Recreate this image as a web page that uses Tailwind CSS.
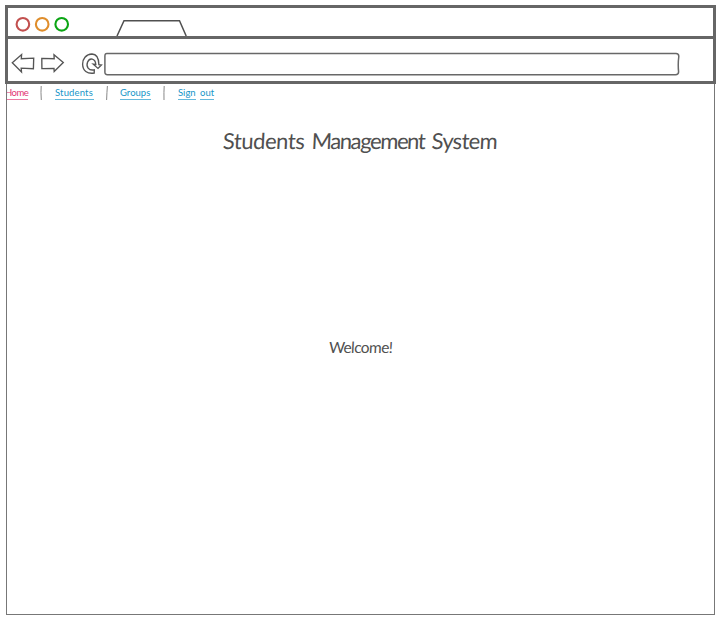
<!DOCTYPE html>
<html lang="en">
<head>
<meta charset="utf-8">
<title>Students Management System</title>
<script src="https://cdn.jsdelivr.net/npm/@tailwindcss/browser@4"></script>
</head>
<body class="bg-white w-[721px] h-[620px] overflow-hidden pt-[5px] pl-[5px] font-['Lato',sans-serif] text-[#505050]">
<div class="w-[711px] h-[610px] flex flex-col">
  <header class="h-[79px] shrink-0 border-[3px] border-[#666] flex flex-col">
    <div class="h-[31px] shrink-0 border-b-[3px] border-[#666] flex items-end">
      <svg class="ml-[6px] self-center mt-[3px]" width="56" height="18" viewBox="0 0 56 18" fill="none" stroke-width="2.1">
        <circle cx="8.9" cy="9.3" r="6.3" stroke="#c2504f"/>
        <circle cx="28.2" cy="9.3" r="6.3" stroke="#df8d2b"/>
        <circle cx="47.7" cy="9.3" r="6.3" stroke="#0ba514"/>
      </svg>
      <svg class="ml-[46px]" width="72" height="18" viewBox="0 0 72 18" fill="none" stroke="#505050" stroke-width="1.5"><path d="M1 18 8 2.7 63.5 2.7 70.2 18"/></svg>
    </div>
    <div class="flex-1 flex">
      <svg class="shrink-0" width="95" height="42" viewBox="8 39 95 42" fill="none" stroke="#555" stroke-width="1.35">
        <path d="M12.3 62.8 21.6 54.5 21.3 58.7 33.7 58.2 33.4 68.7 21.2 68.2 21.5 72Z"/>
        <path d="M41.8 58.4 54.2 58.7 54 54.7 63.3 62.6 54.2 71.6 54 68.4 41.9 68.6Z"/>
        <path d="M94.3 69.8C88.5 71 85.8 66.5 87.6 62C89.6 57.5 95.2 57.8 95.8 64.4L93.2 64.2 98 68.4 101.4 65 98.9 64.7C98.7 57.4 95.8 54 92 54C86 54.2 82.4 59 82.6 64.3C82.8 70.5 87 74.2 94.2 73.1Z"/>
      </svg>
      <svg class="shrink-0 ml-px" width="577" height="42" viewBox="104 39 577 42" fill="none" stroke="#686868" stroke-width="1.5"><path d="M107 53.4H676Q678.9 53.5 678.8 56.5Q677.8 64 678.6 72Q678.5 74.6 675.5 74.7H107.5Q104.8 74.7 104.9 72V56Q105 53.3 107 53.4Z"/></svg>
    </div>
  </header>
  <main class="ml-px w-[709px] flex-1 border border-t-0 border-[#777] flex flex-col items-center overflow-hidden">
    <nav class="w-full h-[20px] shrink-0 flex items-start text-[9.5px] leading-[13px] text-[#1795c8] pt-[2px] whitespace-nowrap">
      <a class="-ml-[2px] w-[23px] h-[14px] border-b border-[#ee78a2] text-[#e23472] tracking-[-0.55px] shrink-0">Home</a>
      <svg class="ml-[11px]" width="4" height="15" fill="none" stroke="#888"><path d="M2.2 0Q1.7 6 2.3 14"/></svg>
      <a class="ml-[12px] w-[39px] h-[14px] border-b border-[#65b9dc] tracking-[0.15px]">Students</a>
      <svg class="ml-[11px]" width="4" height="15" fill="none" stroke="#888"><path d="M2.4 0Q1.9 6 1.6 14"/></svg>
      <a class="ml-[11px] w-[31px] h-[14px] border-b border-[#65b9dc]">Groups</a>
      <svg class="ml-[11px]" width="4" height="15" fill="none" stroke="#888"><path d="M2.2 0Q1.8 6 2 14"/></svg>
      <a class="ml-[12px] flex gap-[4px]"><span class="w-[18px] h-[14px] border-b border-[#65b9dc]">Sign</span><span class="w-[14px] h-[14px] border-b border-[#65b9dc]">out</span></a>
    </nav>
    <h1 class="mt-[23px] text-[22px] leading-[28px] tracking-[-0.45px] [word-spacing:2px] whitespace-nowrap -skew-x-3">Students <span class="tracking-[-1.4px]">Management</span> <span class="tracking-[-0.7px]">System</span></h1>
    <p class="mt-[182px] text-[15.5px] leading-[20px] tracking-[-0.6px] whitespace-nowrap -skew-x-3">Welcome!</p>
  </main>
</div>
</body>
</html>
